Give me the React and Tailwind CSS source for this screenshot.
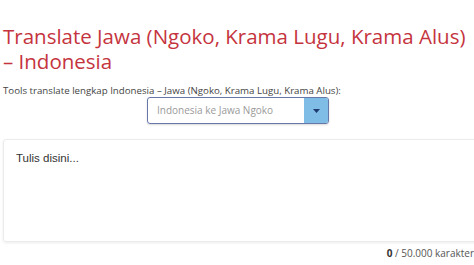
import React from 'react';

const App = () => {
    return (
        <div className="w-[474px] h-[265px] overflow-hidden bg-white">
            <div className="w-[490px] pl-[3px] pt-[24px]">
                <h1 className="w-[465px] text-[20.5px] leading-[25px] text-[#c5343e] font-['Open_Sans',sans-serif] font-normal">
                    Translate Jawa (Ngoko, Krama Lugu, Krama Alus) – Indonesia
                </h1>
                <p className="mt-[10px] text-[9.7px] leading-[13px] text-[#444] font-['Open_Sans',sans-serif]">
                    Tools translate lengkap Indonesia – Jawa (Ngoko, Krama Lugu, Krama Alus):
                </p>
                <div className="flex justify-start pl-[144px]">
                    <div className="flex w-[182px] h-[27px] border border-[#6677a8] rounded-[3px] overflow-hidden shadow-[0_1px_2px_rgba(0,0,0,0.15)]">
                        <div className="flex-1 flex items-center pl-[9px] text-[10px] text-[#9a9a9a] font-['Open_Sans',sans-serif]">
                            Indonesia ke Jawa Ngoko
                        </div>
                        <div className="w-[24px] bg-[#80bde6] flex items-center justify-center">
                            <svg width="7" height="4" viewBox="0 0 7 4">
                                <path d="M0 0 L7 0 L3.5 4 Z" fill="#1d3b6e" />
                            </svg>
                        </div>
                    </div>
                </div>
                <div className="mt-[15px] h-[103px] border border-[#ececec] rounded-[3px] shadow-[0_1px_3px_rgba(0,0,0,0.08)] pl-[12px] pt-[4px]">
                    <span className="text-[11.5px] text-[#333] font-['Liberation_Sans',sans-serif]">Tulis disini...</span>
                </div>
                <div className="w-[471px] text-right mt-[4px] text-[10px] leading-[14px] text-[#555] font-['Open_Sans',sans-serif]">
                    <span className="font-bold text-[#333]">0</span> / 50.000 karakter
                </div>
            </div>
        </div>
    );
};

export default App;
